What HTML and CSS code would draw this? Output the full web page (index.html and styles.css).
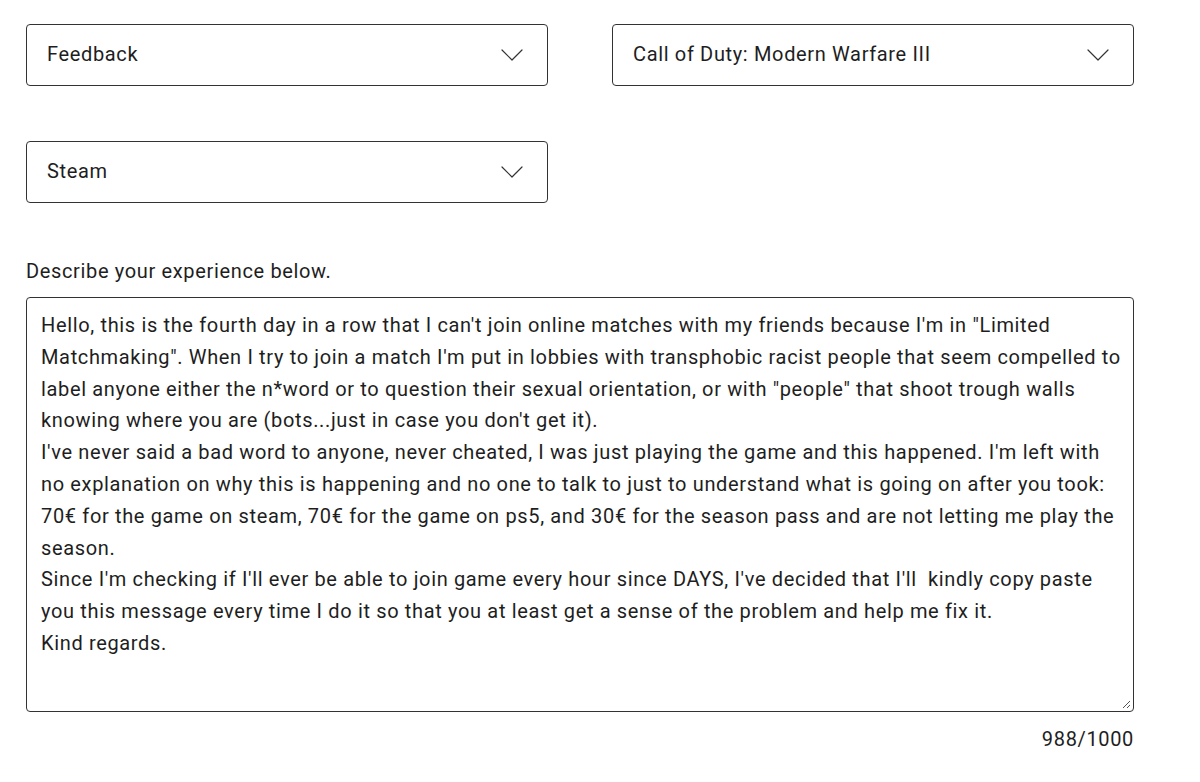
FILE: index.html
```html
<!DOCTYPE html>
<html lang="en">
<head>
<meta charset="utf-8">
<title>Feedback form</title>
<link rel="stylesheet" href="styles.css">
</head>
<body>
<main class="form">
  <div class="row">
    <div class="select"><span class="select-value">Feedback</span><svg class="chev" viewBox="0 0 22 12" width="22" height="12"><path d="M1 1 L11 11 L21 1" fill="none" stroke="#333" stroke-width="1.2" stroke-linecap="round" stroke-linejoin="round"/></svg></div>
    <div class="select"><span class="select-value">Call of Duty: Modern Warfare III</span><svg class="chev" viewBox="0 0 22 12" width="22" height="12"><path d="M1 1 L11 11 L21 1" fill="none" stroke="#333" stroke-width="1.2" stroke-linecap="round" stroke-linejoin="round"/></svg></div>
  </div>
  <div class="row row2">
    <div class="select"><span class="select-value">Steam</span><svg class="chev" viewBox="0 0 22 12" width="22" height="12"><path d="M1 1 L11 11 L21 1" fill="none" stroke="#333" stroke-width="1.2" stroke-linecap="round" stroke-linejoin="round"/></svg></div>
  </div>
  <label class="label">Describe your experience below.</label>
  <div class="textarea" role="textbox" aria-multiline="true">
    <span class="ln">Hello, this is the fourth day in a row that I can't join online matches with my friends because I'm in "Limited</span>
    <span class="ln">Matchmaking". When I try to join a match I'm put in lobbies with transphobic racist people that seem compelled to</span>
    <span class="ln">label anyone either the n*word or to question their sexual orientation, or with "people" that shoot trough walls</span>
    <span class="ln">knowing where you are (bots...just in case you don't get it).</span>
    <span class="ln">I've never said a bad word to anyone, never cheated, I was just playing the game and this happened. I'm left with</span>
    <span class="ln">no explanation on why this is happening and no one to talk to just to understand what is going on after you took:</span>
    <span class="ln">70€ for the game on steam, 70€ for the game on ps5, and 30€ for the season pass and are not letting me play the</span>
    <span class="ln">season.</span>
    <span class="ln">Since I'm checking if I'll ever be able to join game every hour since DAYS, I've decided that I'll&nbsp; kindly copy paste</span>
    <span class="ln">you this message every time I do it so that you at least get a sense of the problem and help me fix it.</span>
    <span class="ln">Kind regards.</span>
    <svg class="grip" viewBox="0 0 10 10" width="10" height="10"><path d="M9 2 L2 9 M9 6 L6 9" stroke="#555" stroke-width="1" fill="none"/></svg>
  </div>
  <div class="counter">988/1000</div>
</main>
</body>
</html>
```

FILE: styles.css
```css
html, body {
  margin: 0;
  padding: 0;
  background: #fff;
}
body {
  font-family: Roboto, "Liberation Sans", sans-serif;
  color: #1e1e1e;
  font-size: 20px;
  letter-spacing: 0.65px;
}
.form {
  width: 1108px;
  padding: 24px 0 0 26px;
  display: flex;
  flex-direction: column;
}
.row {
  display: flex;
  gap: 64px;
}
.row2 {
  margin-top: 55px;
}
.select {
  box-sizing: border-box;
  width: 522px;
  height: 62px;
  border: 1.5px solid #333;
  border-radius: 4px;
  display: flex;
  align-items: center;
  justify-content: space-between;
  padding: 0 24px 0 20px;
}
.select-value {
  line-height: 1;
  margin-top: -2px;
}
.chev {
  display: block;
}
.label {
  margin-top: 57px;
  line-height: 22px;
}
.textarea {
  position: relative;
  box-sizing: border-box;
  margin-top: 15px;
  height: 415px;
  border: 1.5px solid #333;
  border-radius: 4px;
  padding: 12px 14px;
  line-height: 31.8px;
}
.ln {
  display: block;
  white-space: nowrap;
}
.grip {
  position: absolute;
  right: 2px;
  bottom: 2px;
}
.counter {
  align-self: flex-end;
  margin-top: 16px;
  line-height: 22px;
}
```
